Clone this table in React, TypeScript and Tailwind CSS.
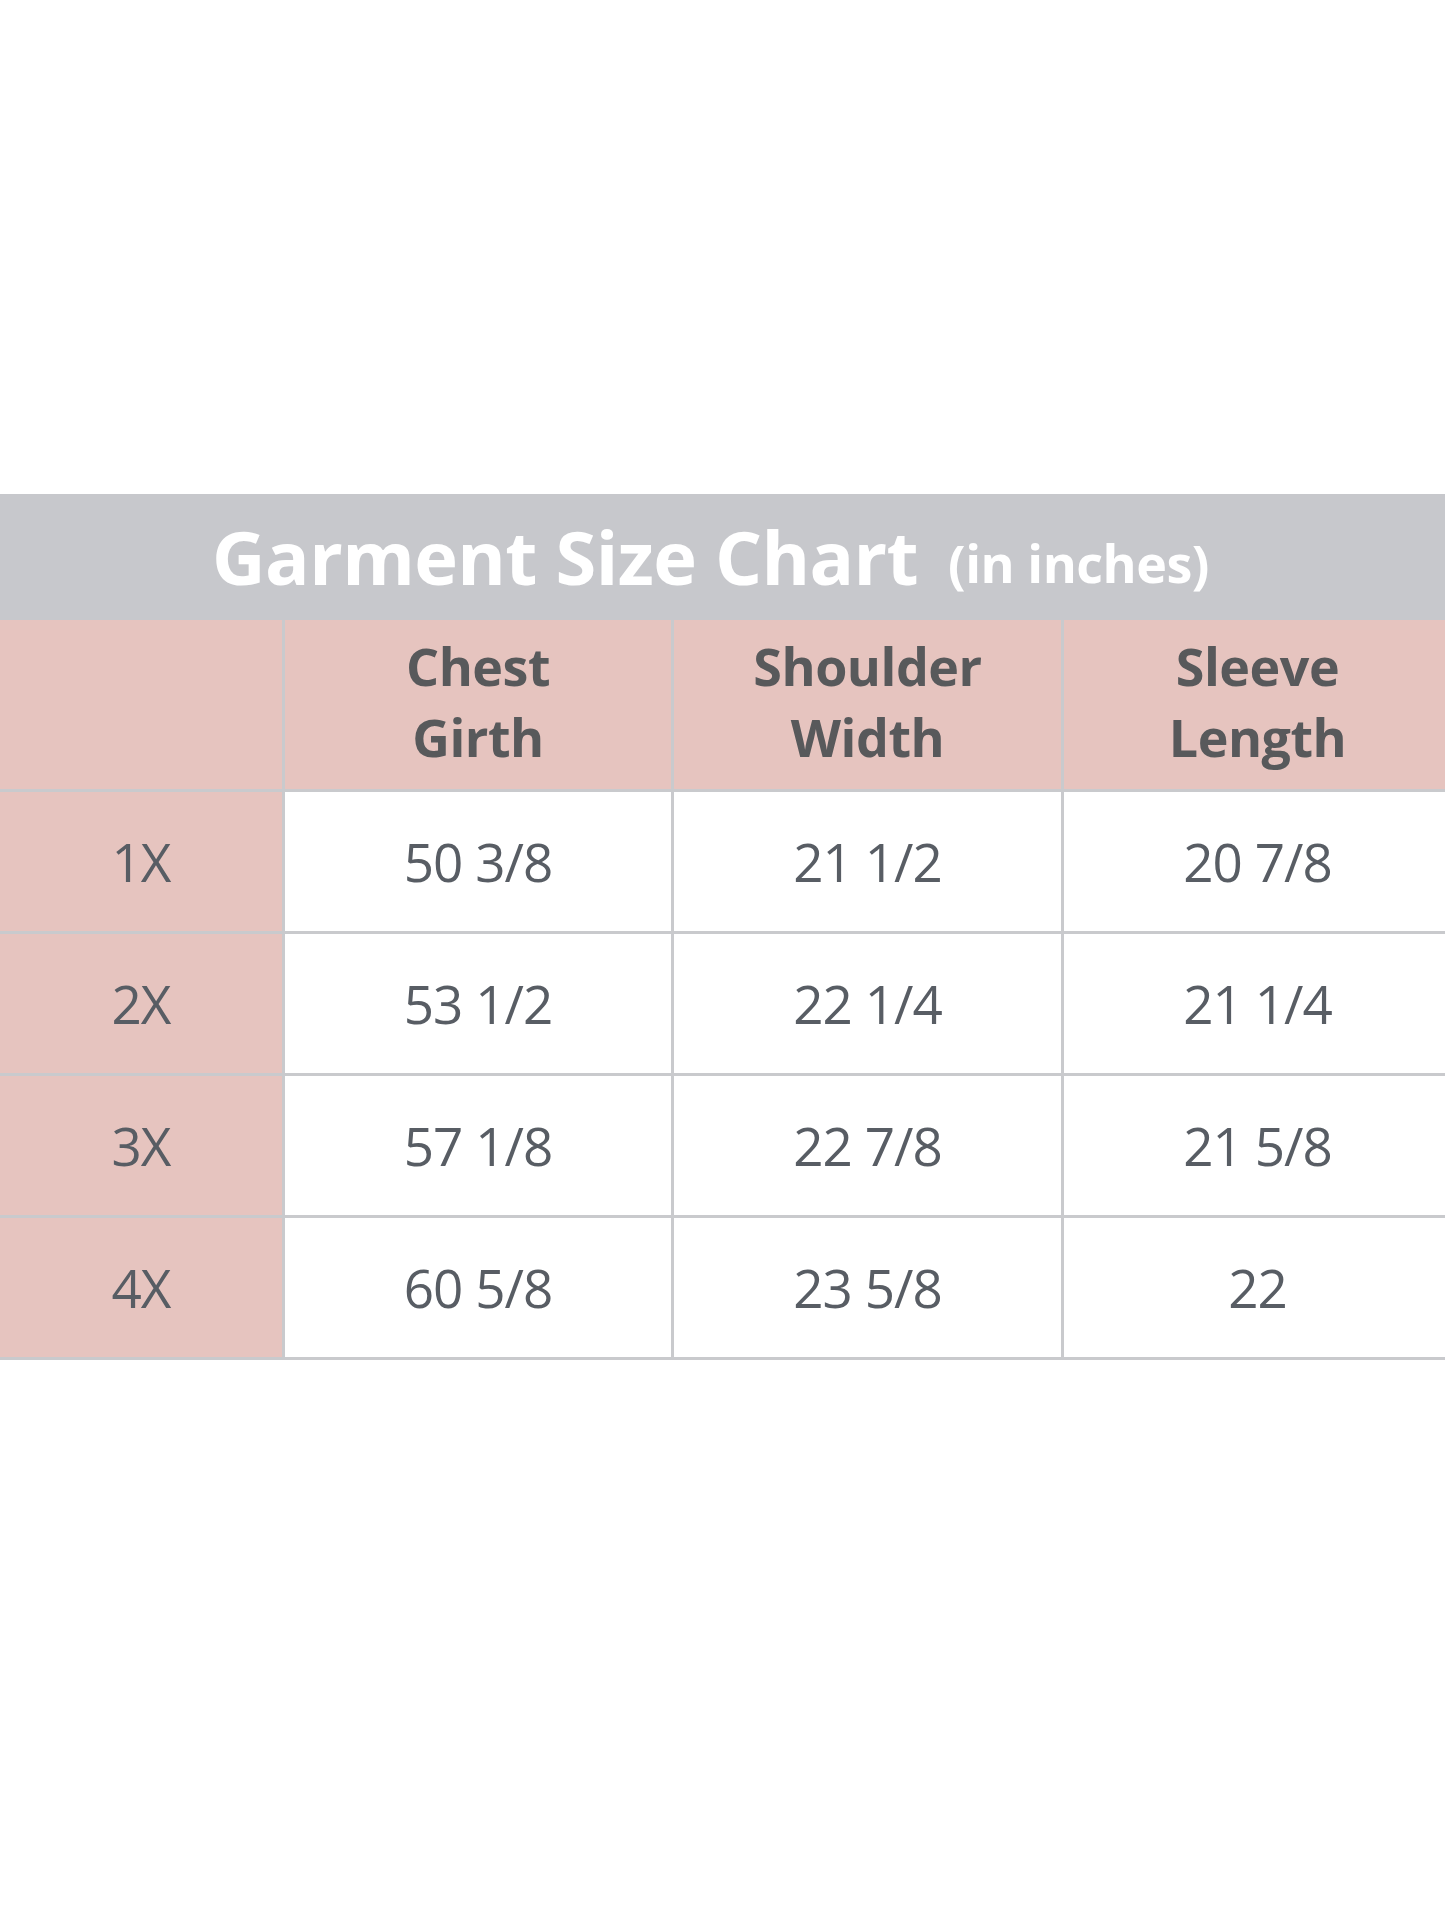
import React from "react";

const rows = [
  ["1X", "50 3/8", "21 1/2", "20 7/8"],
  ["2X", "53 1/2", "22 1/4", "21 1/4"],
  ["3X", "57 1/8", "22 7/8", "21 5/8"],
  ["4X", "60 5/8", "23 5/8", "22"],
];

export default function App() {
  return (
    <div
      className="w-[1445px] h-[1927px] bg-white overflow-hidden"
      style={{ fontFamily: '"Open Sans", "Noto Sans", sans-serif' }}
    >
      <div className="h-[494px]" />
      <div className="h-[126px] bg-[#c7c8cc] flex items-center justify-center pr-[24px]">
        <span className="text-white font-bold text-[74px] leading-none tracking-[-0.6px]">
          Garment Size Chart
        </span>
        <span className="text-white font-bold text-[52px] leading-none ml-[30px] mt-[12px] tracking-[-0.5px]">
          (in inches)
        </span>
      </div>
      <div className="w-[1460px] grid grid-cols-[282px_386px_387px_387px] gap-[3px] bg-[#c9cacd] pb-[3px]">
        <div className="h-[169px] bg-[#e6c4bf]" />
        {["Chest|Girth", "Shoulder|Width", "Sleeve|Length"].map((h) => (
          <div
            key={h}
            className="h-[169px] pb-[8px] bg-[#e6c4bf] flex flex-col items-center justify-center text-[#58595b] font-bold text-[52px] leading-[71px] tracking-[-0.5px]"
          >
            {h.split("|").map((t) => (
              <span key={t}>{t}</span>
            ))}
          </div>
        ))}
        {rows.map((r) => (
          <React.Fragment key={r[0]}>
            <div className="h-[139px] bg-[#e6c4bf] flex items-center justify-center text-[#585d64] text-[53px] tracking-[-1px]">
              {r[0]}
            </div>
            {r.slice(1).map((v, i) => (
              <div
                key={i}
                className="h-[139px] bg-white flex items-center justify-center text-[#585d64] text-[53px] tracking-[-1px]"
              >
                {v}
              </div>
            ))}
          </React.Fragment>
        ))}
      </div>
    </div>
  );
}
